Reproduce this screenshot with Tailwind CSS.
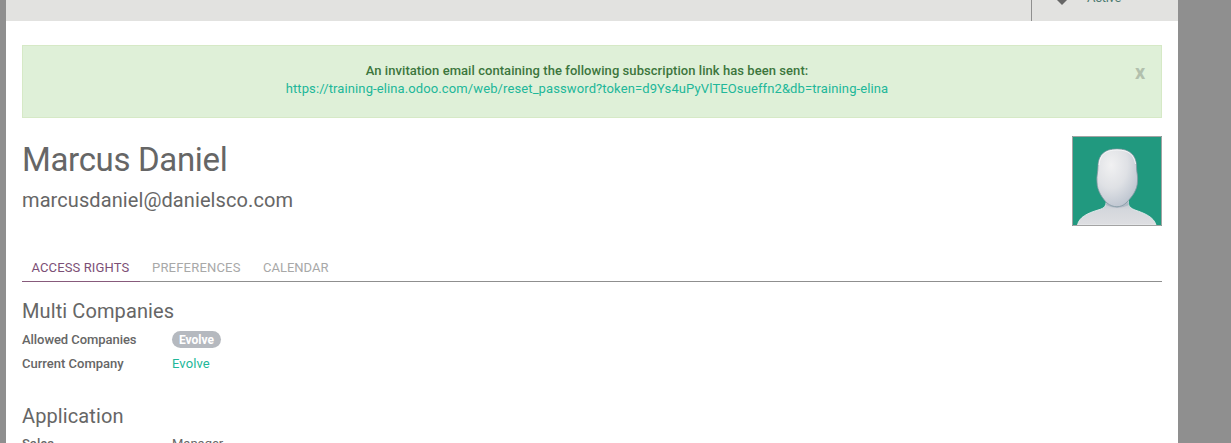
<!DOCTYPE html>
<html lang="en">
<head>
<meta charset="utf-8">
<title>Users</title>
<script src="https://cdn.jsdelivr.net/npm/@tailwindcss/browser@4"></script>
</head>
<body class="h-[443px] overflow-hidden bg-[#8f8f8f] pl-1.5 font-['Roboto',sans-serif] text-[13px] leading-[18px] text-[#666666]">
<div class="h-[443px] w-[1172px] overflow-hidden bg-white">
  <header class="flex h-[21px] justify-end overflow-hidden bg-[#e2e2e0]">
    <div class="flex w-[147px] items-end border-l border-[#8f8f8f] pl-[24px]">
      <svg class="mb-[16px] h-3 w-3" viewBox="0 0 12 12"><path d="M6 0L12 6L6 12L0 6Z" fill="#666"/></svg>
      <span class="mb-[14px] ml-[19px] tracking-[-0.3px] text-[#4c7a70]">Active</span>
    </div>
  </header>
  <main class="px-4 pt-6">
    <div class="flex h-[73px] border border-[#d6e9c6] bg-[#dff0d8] pt-4">
      <div class="w-[1128px] text-center">
        <p class="font-medium tracking-[0.06px] text-[#3c763d]">An invitation email containing the following subscription link has been sent:</p>
        <a class="tracking-[0.11px] text-[#21b799]">https://training-elina.odoo.com/web/reset_password?token=d9Ys4uPyVlTEOsueffn2&amp;db=training-elina</a>
      </div>
      <button class="-ml-[16px] h-5 text-[20px] leading-5 font-bold text-[#b2c0ad]">x</button>
    </div>
    <section class="flex h-[127px] justify-between pt-[18px]">
      <div>
        <h1 class="h-[46px] text-[33px] leading-[48px] tracking-[-0.33px]">Marcus Daniel</h1>
        <h2 class="text-[20px] leading-9 tracking-[0.09px]">marcusdaniel@danielsco.com</h2>
      </div>
      <svg class="h-[90px] w-[90px]" viewBox="0 0 90 90">
        <defs>
          <radialGradient id="face" cx=".35" cy=".28" r=".8"><stop offset="0" stop-color="#f1f1f2"/><stop offset=".5" stop-color="#dfe1e5"/><stop offset="1" stop-color="#b9c1cd"/></radialGradient>
          <linearGradient id="body" x2="0" y2="1"><stop offset="0" stop-color="#b4bcc7"/><stop offset=".45" stop-color="#d4d7dc"/><stop offset="1" stop-color="#dedfe2"/></linearGradient>
        </defs>
        <path d="M0 0H90V90H0Z" fill="#21997f"/>
        <path d="M34 61C35 70 33 72 26 74C16 77 7 81 5.500 89H84C82 81 72 77 63 74C56 71 56 69 56.500 61Z" fill="url(#body)" stroke="#edf0f2" stroke-width=".8"/>
        <path d="M34 62Q45 78 56 62L57 69Q45 75 34 69Z" fill="#9facb9" opacity=".55"/>
        <path d="M45 13C32 13 26.500 19 26 30C26 37 24.500 39 25 46C25 55 31 63 35 67C41 72 49 72 54 67C60 61 65.500 54 65.500 45C66 39 64.500 37 64.500 30C64 19 58 13 45 13Z" fill="url(#face)" stroke="#8198a2" stroke-width=".8"/>
        <path d="M27 29C28 18 34 14 45 14C57 14 62 19 63.500 28" fill="none" stroke="#f5f6f7" stroke-width="1"/>
        <path d="M.5 .5H89.500V89.500H.5Z" fill="none" stroke="#a3a3a3"/>
      </svg>
    </section>
    <nav class="flex h-[37px] items-end border-b border-[#8f8f8f]">
      <span class="-mb-px h-[28px] w-[118px] border-b border-[#875a7b] pl-[9.500px] leading-[27px] tracking-[0.12px] text-[#7c4f76]">ACCESS RIGHTS</span>
      <span class="h-[27px] w-[111px] pl-3 leading-[28px] tracking-[0.2px] text-[#a8a8a8]">PREFERENCES</span>
      <span class="h-[27px] pl-3 leading-[28px] text-[#a8a8a8]">CALENDAR</span>
    </nav>
    <section class="h-[105px]">
      <h3 class="pt-[17px] text-[20px] leading-6 tracking-[0.1px]">Multi Companies</h3>
      <div class="flex h-6 pt-[8px]"><span class="w-[150px] font-medium tracking-[-0.06px]">Allowed Companies</span><span class="flex h-[17px] items-center rounded-full bg-[#b5b9bf] px-[7px] text-[12px] font-bold text-white">Evolve</span></div>
      <div class="flex h-6 pt-[8px]"><span class="w-[150px] font-medium">Current Company</span><a class="tracking-[0.1px] text-[#21b799]">Evolve</a></div>
    </section>
    <section>
      <h3 class="pt-[17px] text-[20px] leading-6 tracking-[0.1px]">Application</h3>
      <div class="flex pt-[7px]"><span class="w-[150px] font-medium">Sales</span><span>Manager</span></div>
    </section>
  </main>
</div>
</body>
</html>
